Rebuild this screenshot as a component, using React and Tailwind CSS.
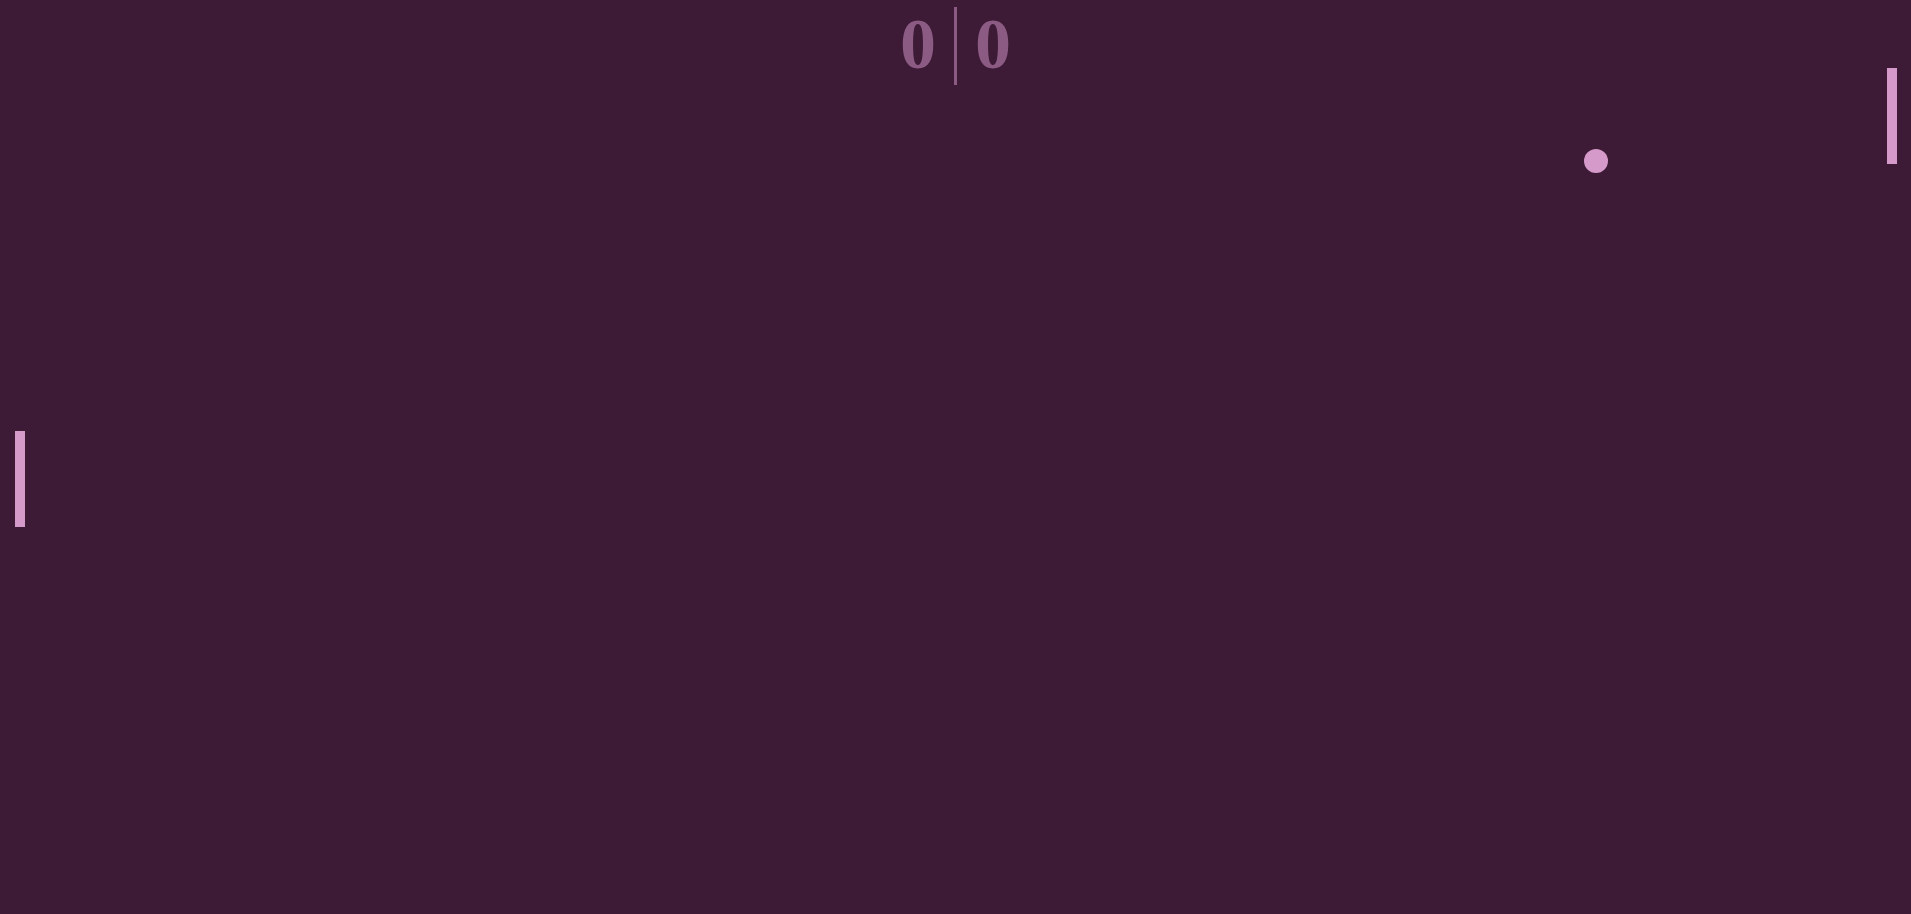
export default function App() {
  return (
    <div className="relative w-full h-screen overflow-hidden bg-[#3d1a36]">
      {/* score */}
      <div className="flex justify-center pt-[7px]">
        <div className="flex items-start gap-[18px] text-[#8c5b84]">
          <span className="text-[72px] leading-[74px] font-bold font-['Liberation_Serif',serif]">0</span>
          <div className="w-[3px] h-[78px] bg-[#8c5b84]" />
          <span className="text-[72px] leading-[74px] font-bold font-['Liberation_Serif',serif]">0</span>
        </div>
      </div>

      {/* paddles */}
      <div className="absolute left-[15px] top-[431px] w-[10px] h-[96px] bg-[#d59ac9]" />
      <div className="absolute left-[1887px] top-[68px] w-[10px] h-[96px] bg-[#d59ac9]" />

      {/* ball */}
      <div className="absolute left-[1584px] top-[149px] w-[24px] h-[24px] rounded-full bg-[#d59ac9]" />
    </div>
  );
}
